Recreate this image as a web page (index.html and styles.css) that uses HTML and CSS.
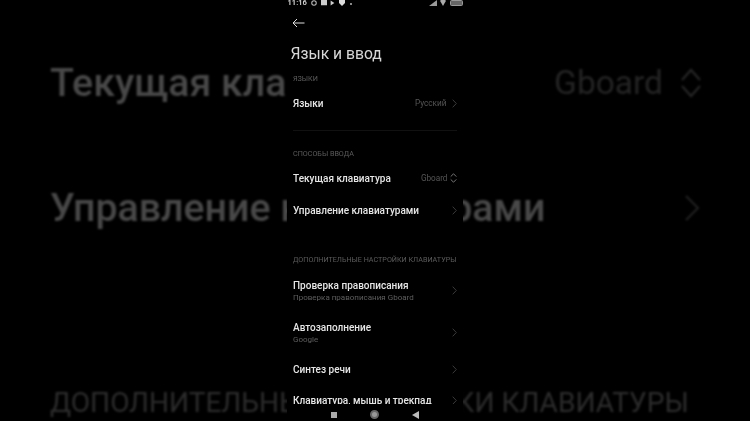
FILE: index.html
```html
<!DOCTYPE html>
<html lang="ru">
<head>
<meta charset="utf-8">
<title>Язык и ввод</title>
<link rel="stylesheet" href="styles.css">
</head>
<body>
<div class="stage">
  <div class="backdrop">
    <div class="bd-row bd-first"><span>Текущая клавиатура</span><span class="bd-value">Gboard</span>
      <svg class="bd-updown" viewBox="0 0 22 30"><path d="M2 12 11 2l9 10M2 18l9 10 9-10"/></svg></div>
    <div class="bd-row bd-second"><span>Управление клавиатурами</span>
      <svg class="bd-chev" viewBox="0 0 16 28"><path d="M2 2l12 12L2 26"/></svg></div>
    <div class="bd-row bd-third"><span>ДОПОЛНИТЕЛЬНЫЕ НАСТРОЙКИ КЛАВИАТУРЫ</span></div>
  </div>

  <main class="phone">
    <div class="status">
      <div class="status-left">
        <span class="time">11:16</span>
        <svg class="si" viewBox="0 0 8 8"><circle cx="4" cy="4" r="3" fill="none" stroke="#bbb" stroke-width="1.4"/></svg>
        <svg class="si" viewBox="0 0 8 8"><rect x="0" y="0" width="8" height="7" fill="#ccc"/></svg>
        <svg class="si small" viewBox="0 0 8 8"><path d="M1 0l6 4-6 4z" fill="#ccc"/></svg>
        <svg class="si" viewBox="0 0 8 8"><path d="M0 0h8v4L4 8 0 4z" fill="#ddd"/></svg>
        <span class="dot"></span>
      </div>
      <div class="status-right">
        <svg class="si wide" viewBox="0 0 9 6"><path d="M1 6 9 0v6z" fill="#999"/></svg>
        <svg class="si" viewBox="0 0 8 8"><path d="M0 1q4-3 8 0L4 8z" fill="#aaa"/></svg>
        <span class="battery"></span>
      </div>
    </div>

    <header class="head">
      <svg class="back" viewBox="0 0 13 10"><path d="M12.5 5H1M5 1 1 5l4 4"/></svg>
      <h1>Язык и ввод</h1>
    </header>

    <div class="list">
      <h2 class="sec sec-a">ЯЗЫКИ</h2>
      <div class="row row-lang">
        <span class="name">Языки</span>
        <span class="val">Русский</span>
        <svg class="chev" viewBox="0 0 5 9"><path d="M.7.7 4.3 4.5.7 8.3"/></svg>
      </div>
      <div class="divider"></div>

      <h2 class="sec sec-b">СПОСОБЫ ВВОДА</h2>
      <div class="row row-cur">
        <span class="name">Текущая клавиатура</span>
        <span class="val">Gboard</span>
        <svg class="updown" viewBox="0 0 7 10"><path d="M.7 3.6 3.5.8l2.8 2.8M.7 6.4l2.8 2.8 2.8-2.8"/></svg>
      </div>
      <div class="row row-man">
        <span class="name">Управление клавиатурами</span>
        <svg class="chev" viewBox="0 0 5 9"><path d="M.7.7 4.3 4.5.7 8.3"/></svg>
      </div>

      <h2 class="sec sec-c">ДОПОЛНИТЕЛЬНЫЕ НАСТРОЙКИ КЛАВИАТУРЫ</h2>
      <div class="row row-two">
        <div class="stack"><span class="name">Проверка правописания</span><span class="sub">Проверка правописания Gboard</span></div>
        <svg class="chev" viewBox="0 0 5 9"><path d="M.7.7 4.3 4.5.7 8.3"/></svg>
      </div>
      <div class="row row-two">
        <div class="stack"><span class="name">Автозаполнение</span><span class="sub">Google</span></div>
        <svg class="chev" viewBox="0 0 5 9"><path d="M.7.7 4.3 4.5.7 8.3"/></svg>
      </div>
      <div class="row row-one">
        <span class="name">Синтез речи</span>
        <svg class="chev" viewBox="0 0 5 9"><path d="M.7.7 4.3 4.5.7 8.3"/></svg>
      </div>
      <div class="row row-one">
        <span class="name">Клавиатура, мышь и трекпад</span>
        <svg class="chev" viewBox="0 0 5 9"><path d="M.7.7 4.3 4.5.7 8.3"/></svg>
      </div>
    </div>

    <nav class="navbar">
      <span class="nav-square"></span>
      <span class="nav-circle"></span>
      <svg class="nav-back" viewBox="0 0 7 8"><path d="M7 0v8L0 4z"/></svg>
    </nav>
  </main>
</div>
</body>
</html>
```
FILE: styles.css
```css
* { box-sizing: border-box; }
html, body { margin: 0; height: 100%; background: #000; }
body { font-family: Roboto, "Liberation Sans", sans-serif; overflow: hidden; }

.stage { position: relative; width: 750px; height: 421px; display: flex; justify-content: center; overflow: hidden; background: #000; }

/* enlarged, dimmed copy of the screen behind the video */
.backdrop { position: absolute; inset: 0; padding: 0 48px 0 50px; filter: blur(.8px); white-space: nowrap; }
.bd-row { display: flex; align-items: center; font-size: 39.3px; font-weight: 500; line-height: 42px; color: #484848; }
.bd-first { margin-top: 62px; }
.bd-second { margin-top: 83px; }
.bd-third { margin-top: 153px; font-size: 28.1px; font-weight: 400; color: #2c2c2c; }
.bd-value { margin-left: auto; font-size: 33.5px; font-weight: 400; color: #242424; }
.bd-updown { width: 22px; height: 30px; margin-left: 17px; fill: none; stroke: #262626; stroke-width: 2.2; }
.bd-chev { width: 16px; height: 28px; margin: 0 2px 0 auto; fill: none; stroke: #222; stroke-width: 2; }

.phone { position: relative; width: 176px; height: 421px; margin-right: 1px; background: #000; display: flex; flex-direction: column; overflow: hidden; filter: blur(.4px); }

.status { height: 6px; padding: 0 0 0 1px; display: flex; justify-content: space-between; align-items: flex-start; flex: none; }
.status-left, .status-right { display: flex; align-items: flex-start; gap: 3.5px; }
.time { font-size: 7.6px; line-height: 6px; font-weight: 500; color: #e6e6e6; margin-right: 1px; }
.si { width: 6px; height: 6px; display: block; }
.si.small { width: 5px; }
.si.wide { width: 9px; }
.dot { width: 1.5px; height: 1.5px; background: #888; margin: 3px 0 0 2px; }
.battery { width: 13px; height: 6px; border: 1px solid #999; border-radius: 1.5px; background: #666; }

.head { flex: none; padding: 12px 0 0 4px; }
.back { display: block; width: 13px; height: 10px; margin-left: 1px; fill: none; stroke: #ddd; stroke-width: 1; }
h1 { margin: 15.5px 0 0; font-size: 15.7px; font-weight: 400; line-height: 20px; color: #d8d8d8; }

.list { flex: 1; min-height: 0; overflow: hidden; padding: 0 6px 0 6.5px; }
.sec { margin: 0; font-size: 7.2px; font-weight: 400; line-height: 9px; color: #5c5c5c; white-space: nowrap; }
.sec-a { margin-top: 10px; }
.sec-b { margin-top: 18px; }
.sec-c { margin-top: 38px; }

.row { display: flex; align-items: center; color: #eee; }
.name { font-size: 10px; font-weight: 500; line-height: 13px; color: #e6e6e6; white-space: nowrap; }
.val { margin-left: auto; font-size: 8.2px; line-height: 10px; color: #555; }
.chev { display: block; width: 5px; height: 9px; margin-left: auto; fill: none; stroke: #3a3a3a; stroke-width: 1; flex: none; }
.val + .chev { margin-left: 5px; }
.updown { display: block; width: 7px; height: 10px; margin-left: 2px; fill: none; stroke: #777; stroke-width: 1; flex: none; }

.row-lang { height: 13px; margin-top: 14px; }
.divider { height: 1px; margin-top: 20px; background: #111; }
.row-cur { height: 13px; margin-top: 14px; }
.row-man { height: 13px; margin-top: 19px; }
.row-two { height: 24px; }
.sec-c + .row-two { margin-top: 15px; }
.row-two + .row-two { margin-top: 18px; }
.row-one { height: 13px; margin-top: 18px; }
.row-one + .row-one { margin-top: 18px; }
.stack { display: flex; flex-direction: column; }
.sub { font-size: 8px; line-height: 11px; color: #5e5e5e; white-space: nowrap; }

.navbar { flex: none; height: 17px; padding: 4px 44px 0 44px; display: flex; justify-content: space-between; align-items: center; background: #000; }
.nav-square { width: 6px; height: 6px; background: #aaa; }
.nav-circle { width: 9px; height: 9px; border-radius: 50%; background: #999; border: 2px solid #666; }
.nav-back { width: 7px; height: 8px; fill: #bbb; }
```
